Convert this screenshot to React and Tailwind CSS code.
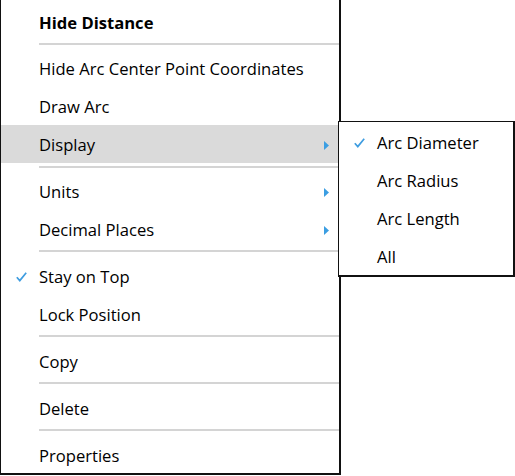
import React from "react";

const Check = () => (
  <svg width="11" height="10" viewBox="0 0 11 10" className="block">
    <polyline points="0.8,5.2 3.8,8.6 10.2,0.8" fill="none" stroke="#3f9de0" strokeWidth="1.7" strokeLinejoin="miter" />
  </svg>
);

const Arrow = () => (
  <svg width="5" height="9" viewBox="0 0 5 9" className="block">
    <polygon points="0,0 5,4.5 0,9" fill="#3b9ee2" />
  </svg>
);

function Row({ label, bold, checked, arrow, active, sub }) {
  return (
    <div className={`flex h-[38px] items-center ${sub ? "pt-[2px]" : "pt-[4px]"} ${active ? "bg-[#dadada]" : ""}`}>
      <div className="flex w-[38px] items-center justify-start pl-[15px]">{checked ? <Check /> : null}</div>
      <span className={`flex-1 ${bold ? "font-bold" : ""}`}>{label}</span>
      {arrow ? (
        <div className="mr-[10px] flex items-center">
          <Arrow />
        </div>
      ) : null}
    </div>
  );
}

const Sep = () => (
  <div className="pb-[4px] pl-[38px] pt-[3px]">
    <div className="h-[2px] bg-[#d4d4d4]" />
  </div>
);

export default function App() {
  return (
    <div
      className="relative h-[476px] w-[515px] overflow-hidden bg-white text-[16.6px] text-black"
      style={{ fontFamily: '"Open Sans", "Noto Sans", sans-serif' }}
    >
      <div className="flex h-[475px] w-[341px] flex-col border-b-2 border-l border-r-2 border-[#111] pt-[2px]">
        <Row label="Hide Distance" bold />
        <Sep />
        <Row label="Hide Arc Center Point Coordinates" />
        <Row label="Draw Arc" />
        <Row label="Display" arrow active />
        <Sep />
        <Row label="Units" arrow />
        <Row label="Decimal Places" arrow />
        <Sep />
        <Row label="Stay on Top" checked />
        <Row label="Lock Position" />
        <Sep />
        <Row label="Copy" />
        <Sep />
        <Row label="Delete" />
        <Sep />
        <Row label="Properties" />
      </div>

      <div className="absolute left-[338px] top-[121px] flex w-[177px] flex-col border border-b-2 border-r-2 border-[#111] bg-white pt-px">
        <Row label="Arc Diameter" checked sub />
        <Row label="Arc Radius" sub />
        <Row label="Arc Length" sub />
        <Row label="All" sub />
      </div>
    </div>
  );
}
